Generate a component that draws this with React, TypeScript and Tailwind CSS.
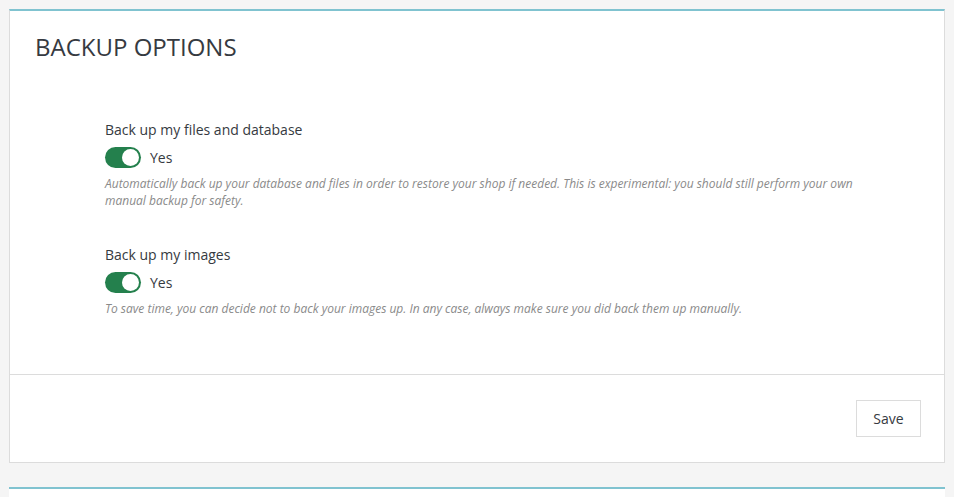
import React from 'react'

function Toggle({ on }: { on: boolean }) {
  return (
    <div className="flex items-center gap-[9px]">
      <div
        className={`relative h-[21px] w-[36px] rounded-full ${on ? 'bg-[#24804d]' : 'bg-[#bbcdd2]'}`}
      >
        <span
          className={`absolute top-[2px] h-[17px] w-[17px] rounded-full bg-white ${on ? 'right-[2px]' : 'left-[2px]'}`}
        />
      </div>
      <span className="text-[14px] text-[#363a41]">{on ? 'Yes' : 'No'}</span>
    </div>
  )
}

interface FieldProps {
  label: string
  help: string
}

function Field({ label, help }: FieldProps) {
  return (
    <div className="flex flex-col">
      <label className="text-[14px] leading-[20px] text-[#363a41]">{label}</label>
      <div className="mt-[7px]">
        <Toggle on />
      </div>
      <p className="mt-[7px] pr-[70px] text-[12px] italic leading-[17px] text-[#8a8a8a]">{help}</p>
    </div>
  )
}

export default function App() {
  return (
    <div
      className="min-h-screen bg-[#f5f5f5] px-[9px] pt-[9px]"
      style={{ fontFamily: '"Open Sans", "Noto Sans", sans-serif' }}
    >
      <div className="border border-[#dcdcdc] border-t-2 border-t-[#80c3d0] bg-white">
        {/* En-tête */}
        <div className="px-[25px] pt-[21px]">
          <h2 className="text-[24px] leading-[30px] font-medium text-[#363a41]">BACKUP OPTIONS</h2>
        </div>

        {/* Champs */}
        <div className="flex flex-col gap-[36px] pl-[95px] pt-[58px] pb-[57px]">
          <Field
            label="Back up my files and database"
            help="Automatically back up your database and files in order to restore your shop if needed. This is experimental: you should still perform your own manual backup for safety."
          />
          <Field
            label="Back up my images"
            help="To save time, you can decide not to back your images up. In any case, always make sure you did back them up manually."
          />
        </div>

        {/* Pied */}
        <div className="flex justify-end border-t border-[#dcdcdc] pl-[25px] pr-[23px] pt-[25px] pb-[25px]">
          <button className="h-[37px] w-[65px] border border-[#dcdcdc] bg-white text-[14px] text-[#363a41]">
            Save
          </button>
        </div>
      </div>

      <div className="mt-[24px] h-[20px] border-t-2 border-t-[#80c3d0] bg-white" />
    </div>
  )
}
